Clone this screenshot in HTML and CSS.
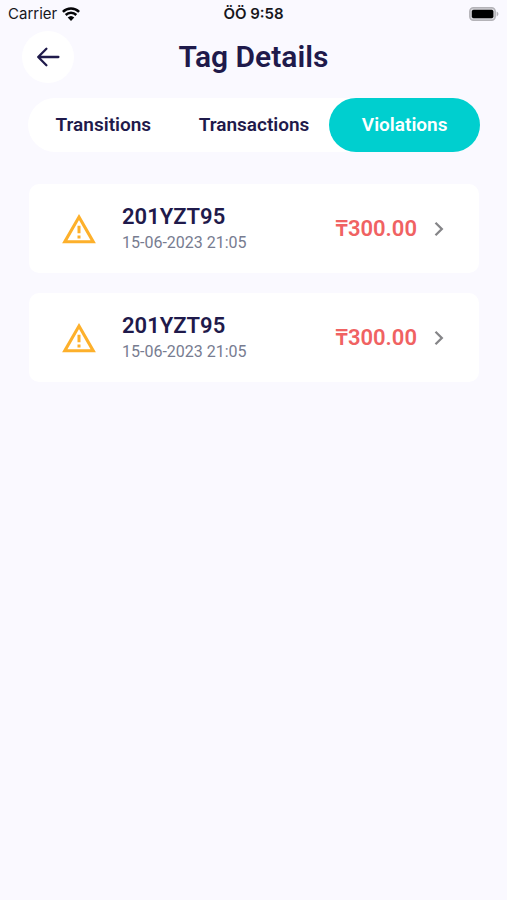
FILE: index.html
```html
<!DOCTYPE html>
<html lang="en">
<head>
<meta charset="utf-8">
<meta name="viewport" content="width=device-width, initial-scale=1">
<title>Tag Details</title>
<link rel="stylesheet" href="styles.css">
</head>
<body>
<div class="status">
  <div class="carrier">
    <span>Carrier</span>
    <svg class="wifi" viewBox="0 0 18 14" aria-hidden="true">
      <path d="M.9 4.9a11.6 11.6 0 0 1 16.2 0M3.7 8a7.5 7.5 0 0 1 10.6 0" fill="none" stroke="#050508" stroke-width="2.5"/>
      <path d="M9 14l-3.3-3.5a4.8 4.8 0 0 1 6.6 0z" fill="#050508"/>
    </svg>
  </div>
  <span class="time">ÖÖ 9:58</span>
  <svg class="battery" viewBox="0 0 30 14" aria-hidden="true">
    <rect x=".8" y=".8" width="25.4" height="12.4" rx="3.6" fill="#d6d5da" stroke="#b4b3b8" stroke-width="1.5"/>
    <rect x="2.8" y="2.8" width="21.6" height="8.4" rx="1.8" fill="#000"/>
    <path d="M27.6 4.6c2.4.8 2.4 4 0 4.8z" fill="#b4b3b8"/>
  </svg>
</div>
<header class="header">
  <button class="back" type="button" aria-label="Back">
    <svg viewBox="0 0 24 20" aria-hidden="true"><path d="M22.4 10H2.4M10.4 1.8L2.2 10l8.2 8.2" fill="none" stroke="#1f1a4b" stroke-width="2.3" stroke-linecap="round" stroke-linejoin="round"/></svg>
  </button>
  <h1>Tag Details</h1>
</header>
<main>
  <nav class="tabs">
    <button type="button">Transitions</button>
    <button type="button">Transactions</button>
    <button type="button" class="active" aria-current="page">Violations</button>
  </nav>
  <ul class="list">
    <li><a class="card" href="#">
      <svg class="warning" viewBox="0 0 34 30" aria-hidden="true"><path d="M17 3.1L31.2 27.7H2.8z" fill="none" stroke="#fdb02b" stroke-width="3.1"/><path d="M17 11.8v7.5M17 21.4v3.2" stroke="#fdb02b" stroke-width="3"/></svg>
      <span class="info"><span class="plate">201YZT95</span><span class="date">15-06-2023 21:05</span></span>
      <span class="amount">₸300.00</span>
      <svg class="chevron" viewBox="0 0 10 16" aria-hidden="true"><path d="M1.5 1.8L7.8 8l-6.3 6.2" fill="none" stroke="#858588" stroke-width="2.3"/></svg>
    </a></li>
    <li><a class="card" href="#">
      <svg class="warning" viewBox="0 0 34 30" aria-hidden="true"><path d="M17 3.1L31.2 27.7H2.8z" fill="none" stroke="#fdb02b" stroke-width="3.1"/><path d="M17 11.8v7.5M17 21.4v3.2" stroke="#fdb02b" stroke-width="3"/></svg>
      <span class="info"><span class="plate">201YZT95</span><span class="date">15-06-2023 21:05</span></span>
      <span class="amount">₸300.00</span>
      <svg class="chevron" viewBox="0 0 10 16" aria-hidden="true"><path d="M1.5 1.8L7.8 8l-6.3 6.2" fill="none" stroke="#858588" stroke-width="2.3"/></svg>
    </a></li>
  </ul>
</main>
</body>
</html>
```
FILE: styles.css
```css
* { box-sizing: border-box; }
body {
  margin: 0;
  min-height: 100vh;
  background: #faf9ff;
  color: #1f1a4b;
  font-family: Roboto, "Noto Sans", sans-serif;
}
button { border: 0; padding: 0; font: inherit; color: inherit; cursor: pointer; }
svg { display: block; flex: none; }
.status {
  display: grid;
  grid-template-columns: 1fr auto 1fr;
  align-items: center;
  height: 27px;
  padding: 0 8px;
  color: #17171c;
  font: 15px/20px Inter, sans-serif;
}
.carrier { display: flex; align-items: center; gap: 5px; }
.wifi { width: 18px; height: 14px; }
.time { font-weight: 600; }
.battery { width: 30px; height: 14px; justify-self: end; }
.header {
  display: grid;
  grid-template-columns: 52px 1fr 52px;
  align-items: center;
  height: 59px;
  padding: 0 22px;
}
.back {
  display: grid;
  place-items: center;
  width: 52px;
  height: 52px;
  border-radius: 50%;
  background: #fff;
}
.back svg { width: 24px; height: 20px; }
h1 { margin: 0; text-align: center; font-size: 30px; line-height: 36px; font-weight: 600; }
main { padding: 12px 27px 28px 28px; }
.tabs {
  display: grid;
  grid-template-columns: repeat(3, 1fr);
  height: 54px;
  border-radius: 27px;
  background: #fff;
}
.tabs button {
  border-radius: 27px;
  background: transparent;
  font-size: 19px;
  line-height: 24px;
  font-weight: 600;
}
.tabs .active { background: #00cfcf; color: #fff; }
.list {
  display: grid;
  gap: 20px;
  margin: 32px 1px 0;
  padding: 0;
  list-style: none;
}
.card {
  display: flex;
  align-items: center;
  min-height: 89px;
  padding: 0 35px 0 33px;
  border-radius: 10px;
  background: #fff;
  color: inherit;
  text-decoration: none;
}
.warning { width: 34px; height: 30px; margin-right: 26px; }
.info { display: flex; flex-direction: column; flex: 1; }
.plate { font-size: 22px; line-height: 28px; font-weight: 600; }
.date { color: #777c90; font-size: 16px; line-height: 24px; }
.amount { color: #f06262; font-size: 22px; line-height: 28px; font-weight: 600; }
.chevron { width: 10px; height: 16px; margin-left: 17px; }
```
